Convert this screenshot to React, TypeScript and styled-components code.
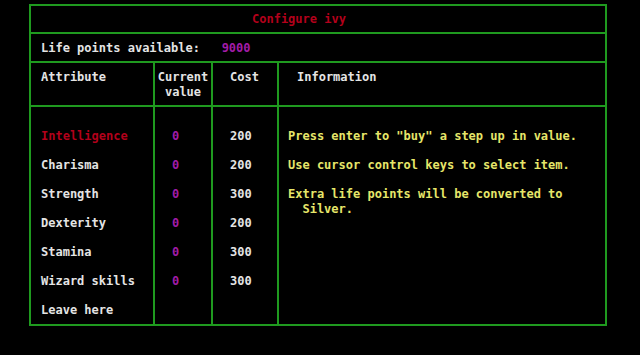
import styled, { createGlobalStyle } from "styled-components";

type Attribute = {
  name: string;
  value?: number;
  cost?: number;
  selected?: boolean;
};

const attributes: Attribute[] = [
  { name: "Intelligence", value: 0, cost: 200, selected: true },
  { name: "Charisma", value: 0, cost: 200 },
  { name: "Strength", value: 0, cost: 300 },
  { name: "Dexterity", value: 0, cost: 200 },
  { name: "Stamina", value: 0, cost: 300 },
  { name: "Wizard skills", value: 0, cost: 300 },
  { name: "Leave here" },
];

const info = [
  'Press enter to "buy" a step up in value.',
  "Use cursor control keys to select item.",
  "Extra life points will be converted to\n  Silver.",
];

const GREEN = "#1f9a1f";
const WHITE = "#e4e4e4";
const RED = "#b3001b";
const PURPLE = "#a21ca8";
const YELLOW = "#e6e66a";

const App = () => {
  return (
    <>
      <GlobalStyle />
      <Screen>
        <Frame>
          <TitleRow>Configure ivy</TitleRow>
          <PointsRow>
            {"Life points available:   "}
            <Points>9000</Points>
          </PointsRow>
          <Table>
            <HeadCell>Attribute</HeadCell>
            <HeadCell $center>
              Current
              <br />
              value
            </HeadCell>
            <HeadCell $pad={17}>Cost</HeadCell>
            <HeadCell $pad={18} $last>
              Information
            </HeadCell>

            {/* attribute columns */}
            <Column>
              {attributes.map((a) => (
                <Cell key={a.name} $color={a.selected ? RED : WHITE}>
                  {a.name}
                </Cell>
              ))}
            </Column>
            <Column $pad={17}>
              {attributes.map((a) => (
                <Cell key={a.name} $color={PURPLE}>
                  {a.value ?? ""}
                </Cell>
              ))}
            </Column>
            <Column $pad={17}>
              {attributes.map((a) => (
                <Cell key={a.name} $color={WHITE}>
                  {a.cost ?? ""}
                </Cell>
              ))}
            </Column>
            <InfoColumn>
              {info.map((line) => (
                <InfoText key={line}>{line}</InfoText>
              ))}
            </InfoColumn>
          </Table>
        </Frame>
      </Screen>
    </>
  );
};

export default App;

const GlobalStyle = createGlobalStyle`
  html, body {
    margin: 0;
    padding: 0;
    background: #000;
  }
  body {
    font-family: "DejaVu Sans Mono", "Liberation Mono", monospace;
    font-weight: bold;
    font-size: 12px;
    color: ${WHITE};
  }
`;

const Screen = styled.div`
  width: 640px;
  height: 355px;
  padding: 4px 0 0 29px;
  box-sizing: border-box;
  background: #000;
`;

const Frame = styled.div`
  width: 578px;
  box-sizing: border-box;
  border: 2px solid ${GREEN};
  display: flex;
  flex-direction: column;
`;

const TitleRow = styled.div`
  height: 26px;
  display: flex;
  align-items: center;
  padding-left: 221px;
  color: ${RED};
  border-bottom: 2px solid ${GREEN};
`;

const PointsRow = styled.div`
  height: 27px;
  display: flex;
  align-items: center;
  padding-left: 10px;
  white-space: pre;
  border-bottom: 2px solid ${GREEN};
`;

const Points = styled.span`
  color: ${PURPLE};
`;

const Table = styled.div`
  display: grid;
  grid-template-columns: 124px 58px 66px 1fr;
  grid-template-rows: 44px 217px;
`;

const HeadCell = styled.div<{ $center?: boolean; $pad?: number; $last?: boolean }>`
  box-sizing: border-box;
  padding-top: 7px;
  padding-left: ${(p) => (p.$center ? 0 : p.$pad ?? 10)}px;
  text-align: ${(p) => (p.$center ? "center" : "left")};
  line-height: 15px;
  border-bottom: 2px solid ${GREEN};
  border-right: ${(p) => (p.$last ? "none" : `2px solid ${GREEN}`)};
`;

const Column = styled.div<{ $pad?: number }>`
  box-sizing: border-box;
  padding: 15px 0 0 ${(p) => p.$pad ?? 10}px;
  border-right: 2px solid ${GREEN};
  display: flex;
  flex-direction: column;
`;

const Cell = styled.div<{ $color: string }>`
  height: 29px;
  line-height: 29px;
  color: ${(p) => p.$color};
  white-space: pre;
`;

const InfoColumn = styled.div`
  padding: 22px 0 0 9px;
  display: flex;
  flex-direction: column;
  gap: 14.5px;
`;

const InfoText = styled.div`
  color: ${YELLOW};
  line-height: 14.5px;
  white-space: pre;
`;
